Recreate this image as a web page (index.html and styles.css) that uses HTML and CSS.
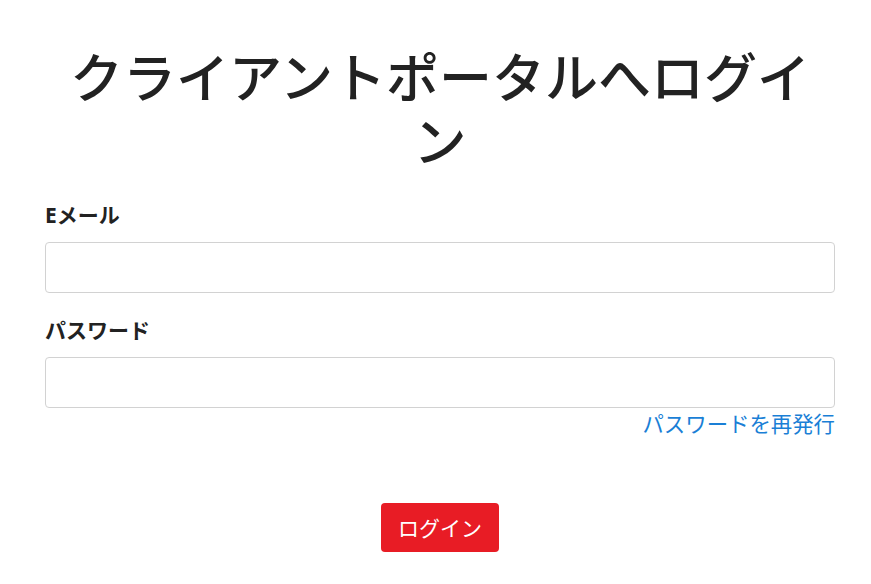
FILE: index.html
```html
<!DOCTYPE html>
<html lang="ja">
<head>
<meta charset="utf-8">
<title>ログイン</title>
<link rel="stylesheet" href="styles.css">
</head>
<body>
<main class="page">
  <h1 class="title">クライアントポータルへログイン</h1>
  <form class="form">
    <div class="field">
      <label class="label" for="email">Eメール</label>
      <input class="input" id="email" type="email">
    </div>
    <div class="field">
      <label class="label" for="password">パスワード</label>
      <input class="input" id="password" type="password">
      <div class="link-row"><a class="link" href="#">パスワードを再発行</a></div>
    </div>
    <div class="actions">
      <button class="btn" type="button">ログイン</button>
    </div>
  </form>
</main>
</body>
</html>
```

FILE: styles.css
```css
* { box-sizing: border-box; }
html, body { margin: 0; padding: 0; background: #fff; }
body {
  font-family: "Open Sans", "Noto Sans CJK JP", sans-serif;
  color: #222;
  font-size: 21px;
  line-height: 30px;
}
.page {
  padding: 46px 36px 0 45px;
}
.title {
  margin: 0 0 26px;
  font-size: 53px;
  font-weight: 500;
  line-height: 64px;
  text-align: center;
  color: #222;
}
.form { display: flex; flex-direction: column; }
.field { display: flex; flex-direction: column; margin-bottom: 22px; }
.label {
  font-weight: 700;
  margin-bottom: 12px;
}
.input {
  width: 100%;
  height: 51px;
  border: 1px solid #d2d2d2;
  border-radius: 4px;
  background: #fff;
  font: inherit;
}
.link-row { display: flex; justify-content: flex-end; margin-top: 1px; }
.link { color: #1a7fd6; text-decoration: none; font-size: 21.4px; }
.actions { display: flex; justify-content: center; margin-top: 42px; }
.btn {
  background: #e81c25;
  color: #fff;
  border: none;
  border-radius: 4px;
  font: inherit;
  height: 49px;
  padding: 0 17px;
}
```
